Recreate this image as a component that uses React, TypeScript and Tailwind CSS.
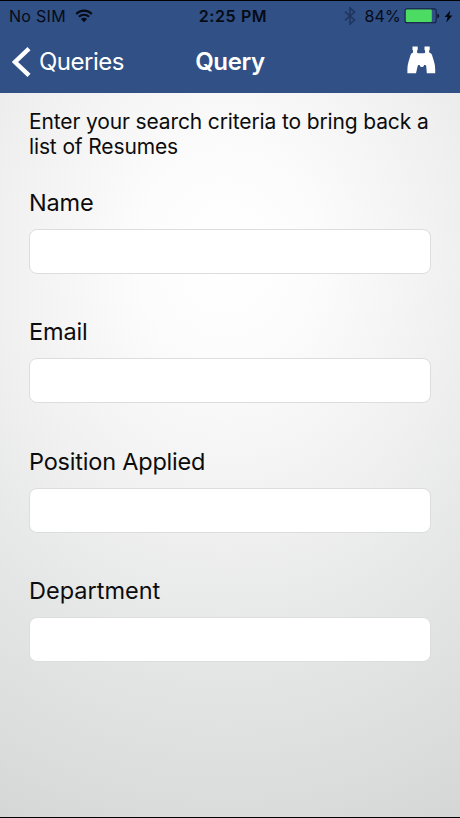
const fields = [
    { label: "Name", className: "tracking-[-0.15px]" },
    { label: "Email", className: "tracking-[-0.15px]" },
    { label: "Position Applied", className: "tracking-[-0.2px]" },
    { label: "Department", className: "tracking-normal" },
];

function WifiIcon() {
    return (
        <svg width="18" height="14" viewBox="0 0 18 14" fill="none" stroke="#060b16">
            <path d="M1.2 4.9a11 11 0 0 1 15.6 0" strokeWidth="2.1" />
            <path d="M3.9 7.8a7.2 7.2 0 0 1 10.2 0" strokeWidth="2.1" />
            <path d="M9 13.2 5.9 10.1a4.4 4.4 0 0 1 6.2 0Z" fill="#060b16" stroke="none" />
        </svg>
    );
}

function BluetoothIcon() {
    return (
        <svg width="12" height="18" viewBox="0 0 12 18" fill="none" stroke="#21355f" strokeWidth="1.6">
            <path d="M1 4.6 10.6 13 6 17V1l4.6 4L1 13.4" />
        </svg>
    );
}

function BatteryIcon() {
    return (
        <svg width="36" height="16" viewBox="0 0 36 16">
            <rect x="1.1" y="0.9" width="31.1" height="13.8" rx="2" fill="none" stroke="#14233f" strokeWidth="1.1" />
            <rect x="1.8" y="1.6" width="26" height="12.4" rx="1" fill="#4cdc64" />
            <path d="M33.4 5.4c2.3.7 2.3 4.1 0 4.8Z" fill="#0a1222" />
        </svg>
    );
}

function BoltIcon() {
    return (
        <svg width="9" height="13" viewBox="0 0 9 13" fill="#04070e">
            <path d="M6.3 0.6 0.6 7.1h3L2.3 12.4 8.4 5.6H5.2Z" />
        </svg>
    );
}

function BinocularsIcon() {
    return (
        <svg width="29" height="28" viewBox="0 0 29 28" fill="#fff">
            <path d="M5.500.5h5.200v3.600l-.6.500v2.200l1 .5h6l1-.5V4.600l-.6-.5V.5h5.200v3.600l-.6.5v1.900c1.700.4 2.500 1.200 3 2.700l1.900 6.300c.8 2.500 1.200 5 1.200 7.500v4.200h-8.400l-.5-6.500c-.1-1.200-.6-1.800-1.500-1.800h-.7c-.2 1.200-.9 2-1.800 2h-.8c-.9 0-1.600-.8-1.800-2h-.7c-.9 0-1.400.6-1.500 1.800L9 27.200H.400V23c0-2.500.4-5 1.200-7.500l1.900-6.300c.5-1.500 1.200-2.300 2.600-2.700V4.600l-.6-.5Z" />
        </svg>
    );
}

function Field({ label, className }: { label: string; className: string }) {
    return (
        <label className="block h-[129.3px]">
            <span className="block h-[40px] text-[23.5px] leading-[28px]">
                <span className={className}>{label}</span>
            </span>
            <input
                type="text"
                className="block h-[45px] w-full rounded-[8px] border border-[#dcdddd] bg-white px-3 text-xl outline-none"
            />
        </label>
    );
}

export default function App() {
    return (
        <div className="flex h-[818px] w-[460px] flex-col overflow-hidden border-y border-black bg-[#305086] font-[Inter,sans-serif] text-[#0c0c0c]">
            {/* Status bar */}
            <div className="grid h-[30px] shrink-0 grid-cols-[1fr_auto_1fr] items-center pr-[7px] pl-[9px] text-[16px] leading-none text-[#060b16]">
                <div className="flex items-center gap-[9px]">
                    <span className="tracking-[0.3px]">No SIM</span>
                    <WifiIcon />
                </div>
                <span className="pl-[4px] text-center font-semibold tracking-[0.6px]">2:25 PM</span>
                <div className="flex items-center justify-end">
                    <BluetoothIcon />
                    <span className="ml-[8px] tracking-[0.2px]">84%</span>
                    <span className="ml-[3px]"><BatteryIcon /></span>
                    <span className="ml-[4px]"><BoltIcon /></span>
                </div>
            </div>

            {/* Navigation bar */}
            <div className="grid h-[62px] shrink-0 grid-cols-[1fr_auto_1fr] items-center pr-[24px] pb-px pl-[24px] text-[24px] text-white">
                <div className="-ml-[12px] flex items-center gap-[8px]">
                    <svg width="19" height="30" viewBox="0 0 19 30" fill="none" stroke="#fff" strokeWidth="4.4">
                        <path d="M17 1.600 3 15l14 13.400" />
                    </svg>
                    <span className="tracking-[-0.5px]">Queries</span>
                </div>
                <span className="text-center font-semibold tracking-[-0.35px]">Query</span>
                <div className="flex justify-end pb-[3px]">
                    <BinocularsIcon />
                </div>
            </div>

            {/* Search form */}
            <div className="flex-1 bg-[radial-gradient(ellipse_547px_640px_at_49%_165px,#ffffff_0%,#fcfcfc_16%,#f0f0f0_42%,#e5e6e6_62%,#dadbdb_87%,#d3d5d4_100%)] px-[29px] pt-[16px]">
                <p className="mb-[30px] text-[21px] leading-[25px] tracking-[-0.13px] whitespace-nowrap">
                    Enter your search criteria to bring back a
                    <br />
                    list of Resumes
                </p>
                {fields.map((field) => (
                    <Field key={field.label} label={field.label} className={field.className} />
                ))}
            </div>
        </div>
    );
}
